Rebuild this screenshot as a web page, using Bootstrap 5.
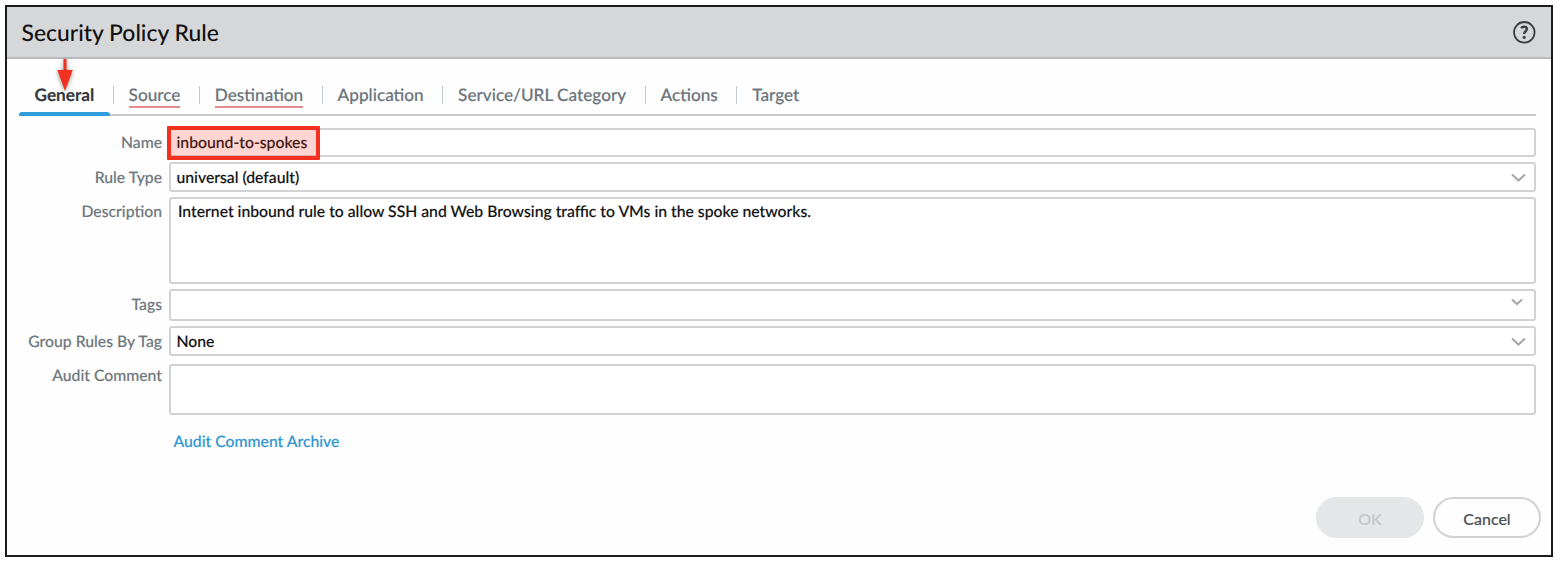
<!DOCTYPE html>
<html lang="en">
<head>
<meta charset="utf-8">
<meta name="viewport" content="width=device-width, initial-scale=1">
<title>Security Policy Rule</title>
<link href="https://cdn.jsdelivr.net/npm/bootstrap@5.3.0/dist/css/bootstrap.min.css" rel="stylesheet">
<style>
  body { font-family: Lato, "Liberation Sans", sans-serif; font-size: 15.75px; line-height: 20px; background: #fff; color: #111; overflow: hidden; -webkit-text-stroke: .15px; text-rendering: geometricPrecision; }
  .dialog { margin: 5px 0 0 5px; width: 1548px; height: 552px; border: 2px solid #1b1b1b; background: #fefefe; }
  .dialog-head { height: 52px; background: #d6d7d9; border-bottom: 2px solid #b9babf; padding: 0 15px 0 14.5px; }
  .dialog-title { font-size: 22.9px; line-height: 48px; font-weight: 500; color: #111; margin: 0 0 1px; -webkit-text-stroke: 0; }
  .tabs-bar { height: 57px; margin: 0 15px 0 12px; padding: 24px 0 0 15.5px; border-bottom: 2px solid #c8c9cb; }
  .tab { position: relative; flex: none; color: #6b747b; font-size: 17.2px; line-height: 24px; font-weight: 500; text-decoration: none; white-space: nowrap; height: 24px; }
  .tab.chosen { color: #33383d; font-weight: 700; }
  .tab.chosen::after { content: ""; position: absolute; left: -15.5px; width: 91px; top: 29px; height: 4px; background: #2f9ddb; border-radius: 3px 3px 0 0; }
  .tab.invalid::after { content: ""; position: absolute; left: 0; right: 0; top: 23px; height: 2px; background: #e58c90; }
  .tab-sep { flex: none; width: 1px; height: 18px; margin: 3px 14.700px 0 18.700px; background: #c3cad0; }
  .pointer { position: absolute; left: 19px; top: -24px; z-index: 2; filter: drop-shadow(0 1px 2px rgba(0,0,0,.45)); }
  .fields { padding: 12px 15px 0 12px; }
  .field-row { display: flex; margin-bottom: 5px; }
  .field-label { flex: none; width: 143px; padding: 6px 0 0; margin-right: 7px; text-align: right; font-weight: 500; color: #6f787d; white-space: nowrap; }
  .field-box { position: relative; flex: 1; border: 2px solid #d0d2d4; border-radius: 3px; background: #fff; padding: 4px 5.500px 0; font-weight: 500; color: #111; }
  .row-name { height: 29px; }
  .row-name .field-label { padding-top: 5px; }
  .row-name .field-box { padding-top: 3px; }
  .row-select { height: 30px; }
  .row-desc { height: 87px; }
  .row-desc .field-label { padding-top: 5px; }
  .row-desc .field-box { padding: 3px 7px; }
  .row-tags { height: 32px; }
  .row-group { margin-bottom: 8px; }
  .row-audit { height: 51px; margin-bottom: 17px; }
  .row-audit .field-label { padding-top: 2px; }
  .chev { position: absolute; top: 9px; right: 8px; }
  .chev-small { position: absolute; top: 7px; right: 11px; }
  .marker { position: absolute; left: -4px; top: -4px; width: 153px; height: 34px; border: 4px solid #f4301f; border-radius: 1px; background: rgba(244,48,31,.2); background-clip: padding-box; }
  .audit-link { color: #2f96cf; font-weight: 500; text-decoration: none; margin-left: 154.500px; }
  .dialog-foot { gap: 9px; padding: 0 10px 17px 0; }
  .pill { width: 108px; height: 41px; border-radius: 21px; padding: 2px 0 0; font-size: 16px; font-weight: 500; border: 2px solid #d0d2d4; color: #4c5156; }
  .pill:disabled { background: #e5e6e8; border-color: #e5e6e8; color: #c3c6c9; opacity: 1; }
</style>
</head>
<body>
<main class="dialog d-flex flex-column">
  <header class="dialog-head d-flex justify-content-between align-items-center">
    <h1 class="dialog-title">Security Policy Rule</h1>
    <svg width="24" height="24" viewBox="0 0 24 24" fill="none" stroke="#3c3e41" stroke-width="1.800"><circle cx="12.300" cy="12.300" r="10.300"/><path d="M9.200 8.300c.6-1.200 1.600-1.600 3-1.600 1.700 0 2.700.8 2.700 2.300 0 2.200-2.700 2.300-2.700 4.700v.4" stroke-width="2.500"/><circle cx="12.200" cy="17.300" r="1.600" fill="#3c3e41" stroke="none"/></svg>
  </header>
  <nav class="tabs-bar d-flex">
    <a class="tab chosen">General<svg class="pointer" width="22" height="34" viewBox="0 0 22 34"><path d="M9.500 0h3v11h6.200L11 32 3.300 11h6.200z" fill="#f4301f"/></svg></a>
    <i class="tab-sep"></i><a class="tab invalid">Source</a>
    <i class="tab-sep"></i><a class="tab invalid">Destination</a>
    <i class="tab-sep"></i><a class="tab">Application</a>
    <i class="tab-sep"></i><a class="tab">Service/URL Category</a>
    <i class="tab-sep"></i><a class="tab">Actions</a>
    <i class="tab-sep"></i><a class="tab">Target</a>
  </nav>
  <section class="fields">
    <div class="field-row row-name"><span class="field-label">Name</span><div class="field-box">inbound-to-spokes<span class="marker"></span></div></div>
    <div class="field-row row-select"><span class="field-label">Rule Type</span><div class="field-box">universal (default)<svg class="chev" width="15" height="10" viewBox="0 0 15 10" fill="none" stroke="#a6aaad" stroke-width="2.200"><path d="M1 1.500l6.500 6 6.500-6"/></svg></div></div>
    <div class="field-row row-desc"><span class="field-label">Description</span><div class="field-box">Internet inbound rule to allow SSH and Web Browsing traffic to VMs in the spoke networks.</div></div>
    <div class="field-row row-tags"><span class="field-label">Tags</span><div class="field-box"><svg class="chev-small" width="12" height="8" viewBox="0 0 12 8" fill="none" stroke="#a6aaad" stroke-width="2.200"><path d="M1 1.500l5 4.500 5-4.500"/></svg></div></div>
    <div class="field-row row-select row-group"><span class="field-label">Group Rules By Tag</span><div class="field-box">None<svg class="chev" width="15" height="10" viewBox="0 0 15 10" fill="none" stroke="#a6aaad" stroke-width="2.200"><path d="M1 1.500l6.500 6 6.500-6"/></svg></div></div>
    <div class="field-row row-audit"><span class="field-label">Audit Comment</span><div class="field-box"></div></div>
    <a class="audit-link">Audit Comment Archive</a>
  </section>
  <footer class="dialog-foot d-flex justify-content-end mt-auto">
    <button class="btn pill" disabled>OK</button>
    <button class="btn pill">Cancel</button>
  </footer>
</main>
<script src="https://cdn.jsdelivr.net/npm/bootstrap@5.3.0/dist/js/bootstrap.bundle.min.js"></script>
</body>
</html>
